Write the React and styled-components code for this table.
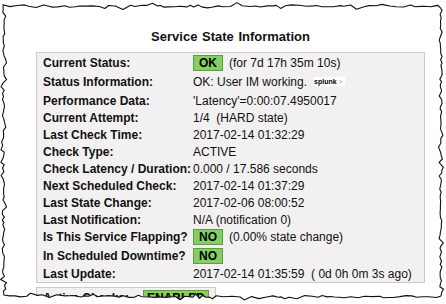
import styled, { createGlobalStyle } from 'styled-components'

const GlobalStyle = createGlobalStyle`
  body {
    margin: 0;
    background: #fff;
    font-family: "Liberation Sans", Arial, sans-serif;
  }
`

const Page = styled.div`
  position: relative;
  width: 446px;
  height: 304px;
  overflow: hidden;
  background: #fff;
  padding-top: 29px;
  box-sizing: border-box;
`
const Content = styled.div`
  margin-left: 36px;
  width: 389px;
`
const Title = styled.h2`
  margin: 0 0 7px;
  font-size: 13px;
  line-height: 16px;
  font-weight: bold;
  word-spacing: 1px;
  text-align: center;
  color: #111;
`
const Table = styled.div`
  border: 1px solid #cacaca;
  background: #f2f0f0;
  padding: 0 6px;
`
const Row = styled.div`
  display: grid;
  grid-template-columns: ${p => p.$label || 150}px auto;
  align-items: center;
  height: ${p => p.$h || 17}px;
  font-size: 12px;
  color: #111;
`
const Label = styled.div`
  font-weight: bold;
  white-space: nowrap;
`
const Value = styled.div`
  display: flex;
  align-items: center;
  gap: 6px;
  white-space: pre;
`
const Badge = styled.span`
  display: inline-flex;
  align-items: center;
  justify-content: center;
  box-sizing: border-box;
  width: ${p => p.$w || 30}px;
  height: 16px;
  background: #84cf62;
  border: 1px solid #5f9a47;
  font-weight: bold;
  font-size: 12px;
  color: #000;
`
const Splunk = styled.span`
  align-self: flex-start;
  margin-top: 2px;
  background: #fff;
  padding: 0 2px 0 1px;
  font-size: 7px;
  line-height: 9px;
  font-weight: bold;
  color: #000;
  span { color: #999; font-weight: normal; }
`
const SubBox = styled.div`
  margin-top: 4px;
  width: 180px;
  box-sizing: border-box;
  border: 1px solid #cacaca;
  background: #f2f0f0;
  padding: 1px 6px;
`
const Torn = styled.svg`
  position: absolute;
  inset: 0;
  pointer-events: none;
`

function rng(seed) {
  let s = seed
  return () => {
    s = (s * 16807) % 2147483647
    return (s - 1) / 2147483646
  }
}

// jagged "torn paper" outline around the capture
function tornPath() {
  const r = rng(91)
  const jit = () => {
    const v = (r() - 0.5) * 2.4
    return r() < 0.14 ? v + (r() < 0.5 ? -2.2 : 2.2) : v
  }
  const step = () => 3 + r() * 5
  const side = () => 2 + r() * 3
  const pts = []
  for (let x = 3; x < 441; x += step()) pts.push([x, 6 + jit()])
  for (let y = 6; y < 293; y += side()) pts.push([441 + jit(), y])
  for (let x = 441; x > 4; x -= step()) pts.push([x, 296.5 + jit()])
  for (let y = 295; y > 6; y -= side()) pts.push([3.5 + jit(), y])
  return 'M' + pts.map(p => p[0].toFixed(1) + ' ' + p[1].toFixed(1)).join(' L') + ' Z'
}

const edge = tornPath()

function TornEdge() {
  return (
    <Torn width="446" height="304" viewBox="0 0 446 304">
      <path d={'M0 0H446V304H0Z ' + edge} fill="#fff" fillRule="evenodd" />
      <path d={edge} fill="none" stroke="#111" strokeWidth="1.1" strokeLinejoin="round" />
    </Torn>
  )
}

const rows = [
  { label: 'Current Status:', h: 19, badge: 'OK', text: '(for 7d 17h 35m 10s)' },
  { label: 'Status Information:', h: 20, text: 'OK: User IM working.', splunk: true },
  { label: 'Performance Data:', text: "'Latency'=0:00:07.4950017" },
  { label: 'Current Attempt:', text: '1/4  (HARD state)' },
  { label: 'Last Check Time:', text: '2017-02-14 01:32:29' },
  { label: 'Check Type:', text: 'ACTIVE' },
  { label: 'Check Latency / Duration:', text: '0.000 / 17.586 seconds' },
  { label: 'Next Scheduled Check:', text: '2017-02-14 01:37:29' },
  { label: 'Last State Change:', text: '2017-02-06 08:00:52' },
  { label: 'Last Notification:', text: 'N/A (notification 0)' },
  { label: 'Is This Service Flapping?', h: 18, badge: 'NO', text: '(0.00% state change)' },
  { label: 'In Scheduled Downtime?', h: 19, badge: 'NO' },
  { label: 'Last Update:', text: '2017-02-14 01:35:59  ( 0d 0h 0m 3s ago)' },
]

export default function App() {
  return (
    <>
      <GlobalStyle />
      <Page>
        <Content>
          <Title>Service State Information</Title>
          <Table>
            {rows.map(r => (
              <Row key={r.label} $h={r.h}>
                <Label>{r.label}</Label>
                <Value>
                  {r.badge && <Badge>{r.badge}</Badge>}
                  {r.text && <span>{r.text}</span>}
                  {r.splunk && <Splunk>splunk <span>&gt;</span></Splunk>}
                </Value>
              </Row>
            ))}
          </Table>
          <SubBox>
            <Row $label={100} $h={18}>
              <Label>Active Checks:</Label>
              <Value><Badge $w={66}>ENABLED</Badge></Value>
            </Row>
          </SubBox>
        </Content>
        <TornEdge />
      </Page>
    </>
  )
}
